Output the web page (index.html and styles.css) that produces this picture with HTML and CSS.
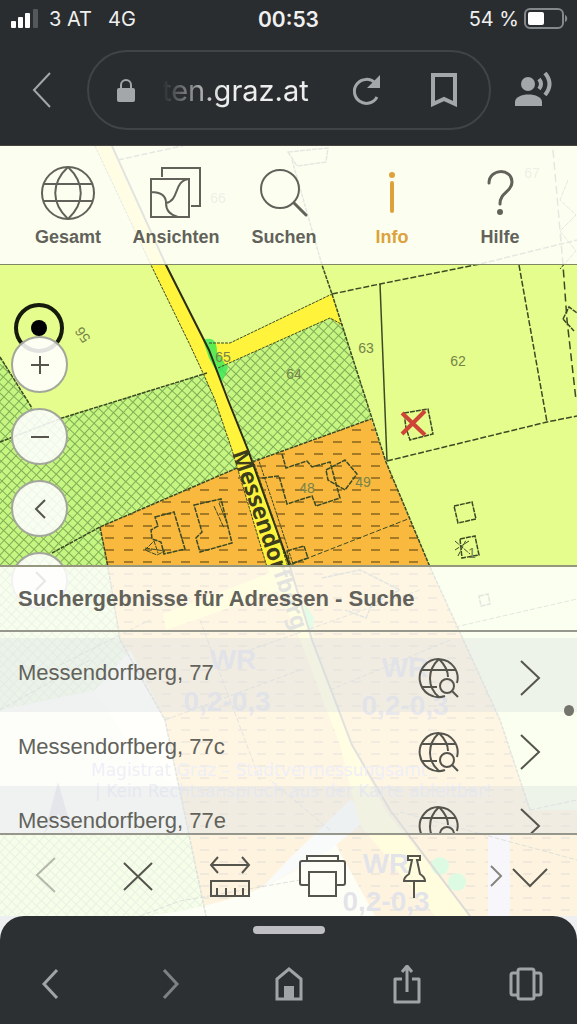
FILE: index.html
```html
<!DOCTYPE html>
<html lang="de">

<head>
    <meta charset="UTF-8">
    <meta name="viewport" content="width=device-width, initial-scale=1.0">
    <title>Stadtplan Graz</title>
    <link rel="stylesheet" href="styles.css">
</head>

<body>
    <header class="browser-top">
        <div class="status-bar">
            <div class="status-left">
                <svg width="32" height="20" viewBox="0 0 32 20" fill="#fff">
                    <rect x="2" y="12" width="5" height="7" rx="1" />
                    <rect x="9" y="8" width="5" height="11" rx="1" />
                    <rect x="16" y="4" width="5" height="15" rx="1" />
                    <rect x="24" y="0" width="5" height="19" rx="1" fill="#55585b" />
                </svg>
                <span>3 AT</span>
                <span class="network">4G</span>
            </div>
            <div class="clock">00:53</div>
            <div class="status-right">
                <span>54 %</span>
                <svg width="44" height="22" viewBox="0 0 44 22">
                    <rect x="1" y="1" width="38" height="19" rx="5" fill="none" stroke="#85888a" stroke-width="2" />
                    <rect x="4" y="4" width="16" height="13" rx="2" fill="#fff" />
                    <path d="M41 7c3 1 3 6 0 7z" fill="#85888a" />
                </svg>
            </div>
        </div>
        <div class="address-row">
            <button class="browser-btn" aria-label="Zurück">
                <svg width="20" height="38" viewBox="0 0 20 38" fill="none" stroke="#a4a7a9" stroke-width="2"><path d="M18 2L2 19l16 17" /></svg>
            </button>
            <form class="address-bar">
                <svg width="18" height="24" viewBox="0 0 18 24"><rect y="10" width="18" height="14" rx="2" fill="#a4a7a9" /><path d="M4 11V7a5 5 0 0 1 10 0v4" fill="none" stroke="#a4a7a9" stroke-width="2" /></svg>
                <input class="address-input" type="text" value="ten.graz.at" aria-label="Adresse">
                <button class="browser-btn" type="button" aria-label="Neu laden">
                    <svg width="30" height="32" viewBox="0 0 30 32"><path d="M26 23A12 12 0 1 1 24 9" fill="none" stroke="#a4a7a9" stroke-width="3" /><path d="M29 1v13H16z" fill="#a4a7a9" /></svg>
                </button>
                <button class="browser-btn bookmark" type="button" aria-label="Lesezeichen">
                    <svg width="26" height="34" viewBox="0 0 26 34"><path d="M2 2h22v29l-11-5-11 5z" fill="none" stroke="#a4a7a9" stroke-width="4" /></svg>
                </button>
            </form>
            <button class="browser-btn" aria-label="Vorlesen">
                <svg width="40" height="38" viewBox="0 0 40 38">
                    <circle cx="14" cy="13" r="7" fill="#a4a7a9" />
                    <path d="M1 35v-4c0-10 27-10 27 0v4z" fill="#a4a7a9" />
                    <path d="M25 8q4 5 0 10M31 2q9 11 0 22" fill="none" stroke="#a4a7a9" stroke-width="4" />
                </svg>
            </button>
        </div>
    </header>

    <main class="viewer">
        <svg class="map" viewBox="0 146 577 770" preserveAspectRatio="xMinYMin slice" aria-hidden="true">
            <defs>
                <pattern id="hatch" width="7" height="7" patternUnits="userSpaceOnUse" patternTransform="rotate(43)">
                    <rect width="7" height="7" fill="#c6f582" />
                    <path d="M0 0h7M0 0v7" stroke="#7fae55" stroke-width="2" />
                </pattern>
                <pattern id="dashes" x="5" y="4" width="19" height="12" patternUnits="userSpaceOnUse">
                    <rect width="19" height="12" fill="#f8b93e" />
                    <path d="M5 6h9" stroke="#a57a26" stroke-width="2" />
                </pattern>
            </defs>
            <rect y="146" width="577" height="770" fill="#e4fd8c" />

            <!-- zones -->
            <path d="M0 357L32 408 62 418 207 373 237 468 100 527 120 640 165 720 206 916H0z" fill="url(#hatch)" />
            <path d="M218 368L330 318 343 325 371 418 252 462z" fill="url(#hatch)" />
            <path d="M100 527L237 468 252 462 371 419 386 462 430 567 500 720 530 810H577V916H206L195 860 165 720 120 640z" fill="url(#dashes)" />
            <path d="M0 710L95 690 160 720 190 834H0z" fill="#f0f8dc" />
            <path d="M95 690L130 650 165 720 180 790 140 760z" fill="#fbfbe0" />
            <path d="M150 916C220 905 290 890 350 826L336 845 375 916z" fill="#f2ffd0" />
            <path d="M290 858L350 800 378 810 330 850 260 890z" fill="#d5e6e0" />
            <path d="M488 834h22v82h-22z" fill="#cfc8e0" />

            <!-- roads -->
            <path d="M95 146L151 265 190 345 203 373 215 400 232 450 267 567 300 640 340 745 360 825 435 916H470L385 810 352 745 312 640 290 567 248 450 228 400 209 350 166 265 112 146z" fill="#fff33c" />
            <path d="M209 343H230L332 294 342 326 330 318 218 368z" fill="#fff33c" />
            <path d="M163 614L272 572 280 590 166 630z" fill="#fff33c" />
            <path d="M203 340Q217 335 217 352L228 368 222 382 209 358z" fill="#35e858" fill-opacity=".8" />
            <path d="M304 602L314 618 312 634 306 622z" fill="#35e858" />
            <circle cx="440" cy="866" r="9" fill="#35e858" />
            <circle cx="457" cy="882" r="9" fill="#35e858" />

            <!-- parcel lines -->
            <g fill="none" stroke="#3b4a24" stroke-width="1">
                <path d="M112 146L166 265 209 350 228 400 248 450 290 567 312 640 352 745 390 810 470 916" stroke="#2b2c12" stroke-width="2" />
                <path d="M95 146L151 265 190 345 203 373 215 400 232 450 267 567M209 343H230L332 294M218 368L330 318 343 325M253 460L272 515 288 567M258 458L277 515 294 567" stroke-dasharray="3 1" />
                <path d="M0 357L32 408M0 442L62 418 207 373M52 553L100 527 237 468M252 462L371 419M100 527L108 567 120 640 165 720 206 916M292 160L322 265 332 294 386 462 430 567 500 720 530 810" stroke-width="1.500" stroke-dasharray="4 1" />
                <path d="M332 294L380 284 480 264 577 240M387 461L547 422 577 416M519 265L547 422M118 160L218 138" stroke-width="1.500" stroke-dasharray="6 2" />
                <path d="M380 284L387 461" stroke-width="1.500" />
                <path d="M553 150L563 265 567 320 576 400" stroke-width="1.500" stroke-dasharray="8 4" />
                <path d="M285 567L408 519M455 627L577 599M60 665L150 620M250 650L420 590M330 690L450 640M0 710L90 660M165 720L300 670M200 620L260 780M530 810L577 800M330 830L270 780M140 916L180 901 300 880M400 812L577 860" stroke-dasharray="5 2" />
                <!-- buildings -->
                <g stroke-dasharray="5 1" stroke-width="1.500">
                    <path d="M155 517L174 512 185 549 164 554 161 542 152 539 151 530 158 526zM194 505L221 499 232 543 200 552 196 538 202 532z" />
                    <path d="M282 454L286 468 307 461 312 467 330 462 340 498 316 506 312 496 287 504 279 476 262 478" />
                    <path d="M326 470L345 460 357 474 345 490 328 480zM287 551L304 546 308 558 290 564zM404 413L428 409 433 434 410 440 406 428zM454 506L472 502 476 519 458 523zM460 539L475 536 479 555 462 558zM563 319L569 307 577 313M563 319L574 331M479 596L488 594 490 604 481 606zM288 152L328 148 326 162 297 166zM322 578L360 570 400 590 372 604 366 618 345 610" />
                    <path d="M145 548l20 3-8 4-12-5 9-9 4 12M214 506l10 22M219 503l8 20M455 541l15 13M455 550l14-9M458 556l8-16M568 180l-8 20 16 15-16 16 16 20-16 18" stroke-width="1" />
                </g>
            </g>
            <path d="M402 413l23 22M425 411l-23 23" stroke="#ce4538" stroke-width="4" />
            <circle cx="39" cy="328" r="23" fill="none" stroke="#161a0c" stroke-width="4" />
            <circle cx="39" cy="328" r="8" fill="#000" />

            <g class="parcel-no">
                <text x="366" y="343">63</text>
                <text x="458" y="356">62</text>
                <text x="294" y="369">64</text>
                <text x="223" y="352">65</text>
                <text x="307" y="483">48</text>
                <text x="363" y="477">49</text>
                <text x="472" y="548">1</text>
                <text x="218" y="193">66</text>
                <text x="532" y="168">67</text>
                <text transform="translate(78 338) rotate(235)">56</text>
            </g>
            <text class="street" transform="translate(232 453) rotate(71)">Messendorfberg</text>
            <g class="zone-label">
                <text x="233" y="669">WR</text>
                <text x="227" y="711">0,2-0,3</text>
                <text x="405" y="677">WR</text>
                <text x="405" y="715">0,2-0,3</text>
                <text x="386" y="873">WR</text>
                <text x="386" y="911">0,2-0,3</text>
            </g>
            <path d="M58 782l-14 52 14-20 15 20z" fill="#777a9a" />
            <g class="map-note">
                <text x="91" y="776">Magistrat Graz – Stadtvermessungsamt</text>
                <text x="95" y="797">| Kein Rechtsanspruch aus der Karte ableitbar!</text>
            </g>
        </svg>

        <nav class="main-menu">
            <a class="menu-item" href="#gesamt">
                <svg viewBox="0 0 56 56"><circle cx="28" cy="28" r="26" /><path d="M28 2c-17 16-17 36 0 52M28 2c17 16 17 36 0 52M4 19h48M4 36h48" /></svg>
                Gesamt
            </a>
            <a class="menu-item" href="#ansichten">
                <svg viewBox="0 0 56 56"><path d="M14 12V3h38v38h-9M3 14h38v38H3zM3 27c9 0 15 3 15 11 0 7 4 12 12 14M18 38c14-3 7-22 23-24" /></svg>
                Ansichten
            </a>
            <a class="menu-item" href="#suchen">
                <svg viewBox="0 0 56 56"><circle cx="24" cy="24" r="19" /><path d="M38 38l12 12" stroke-width="3" stroke-linecap="round" /></svg>
                Suchen
            </a>
            <a class="menu-item active" href="#info">
                <svg viewBox="0 0 56 56"><path d="M28 18v28" stroke-width="4" stroke-linecap="round" /><circle cx="28" cy="10" r="3" fill="currentColor" stroke="none" /></svg>
                Info
            </a>
            <a class="menu-item" href="#hilfe">
                <svg viewBox="0 0 56 56"><path d="M17 18c0-15 23-15 23-1 0 10-12 10-12 22" stroke-width="3" stroke-linecap="round" /><circle cx="28" cy="47" r="3" fill="currentColor" stroke="none" /></svg>
                Hilfe
            </a>
        </nav>

        <div class="map-window">
            <div class="map-controls">
                <button class="round-btn" aria-label="Vergrößern"><svg viewBox="0 0 24 24"><path d="M3 12h18M12 3v18" /></svg></button>
                <button class="round-btn" aria-label="Verkleinern"><svg viewBox="0 0 24 24"><path d="M3 12h18" /></svg></button>
                <button class="round-btn" aria-label="Vorige Ansicht"><svg viewBox="0 0 24 24"><path d="M17 3l-9 9 9 9" /></svg></button>
                <button class="round-btn" aria-label="Nächste Ansicht"><svg viewBox="0 0 24 24"><path d="M8 3l9 9-9 9" /></svg></button>
            </div>
        </div>

        <section class="results">
            <h1 class="results-title">Suchergebnisse für Adressen - Suche</h1>
            <ul class="results-list">
                <li class="result">
                    <a class="result-name" href="#77">Messendorfberg, 77</a>
                    <button class="icon-btn" aria-label="Auf Karte zeigen"><svg width="42" height="42" viewBox="0 0 42 42"><path d="M39 26A19 19 0 1 0 27 39M21 2c-12 11-12 28 0 38M21 2c6 6 9 11 9 18M4 13h34M4 30h15" /><circle cx="29" cy="29" r="7" /><path d="M34 34l6 6" /></svg></button>
                    <button class="icon-btn" aria-label="Details"><svg width="24" height="38" viewBox="0 0 24 38"><path d="M3 2l18 17L3 36" /></svg></button>
                </li>
                <li class="result">
                    <a class="result-name" href="#77c">Messendorfberg, 77c</a>
                    <button class="icon-btn" aria-label="Auf Karte zeigen"><svg width="42" height="42" viewBox="0 0 42 42"><path d="M39 26A19 19 0 1 0 27 39M21 2c-12 11-12 28 0 38M21 2c6 6 9 11 9 18M4 13h34M4 30h15" /><circle cx="29" cy="29" r="7" /><path d="M34 34l6 6" /></svg></button>
                    <button class="icon-btn" aria-label="Details"><svg width="24" height="38" viewBox="0 0 24 38"><path d="M3 2l18 17L3 36" /></svg></button>
                </li>
                <li class="result">
                    <a class="result-name" href="#77e">Messendorfberg, 77e</a>
                    <button class="icon-btn" aria-label="Auf Karte zeigen"><svg width="42" height="42" viewBox="0 0 42 42"><path d="M39 26A19 19 0 1 0 27 39M21 2c-12 11-12 28 0 38M21 2c6 6 9 11 9 18M4 13h34M4 30h15" /><circle cx="29" cy="29" r="7" /><path d="M34 34l6 6" /></svg></button>
                    <button class="icon-btn" aria-label="Details"><svg width="24" height="38" viewBox="0 0 24 38"><path d="M3 2l18 17L3 36" /></svg></button>
                </li>
            </ul>
            <span class="scroll-dot"></span>
        </section>

        <div class="tools">
            <button class="tool disabled" aria-label="Zurück"><svg width="50" height="50" viewBox="0 0 50 50"><path d="M34 7L16 24l18 17" /></svg></button>
            <button class="tool" aria-label="Schließen"><svg width="50" height="50" viewBox="0 0 50 50"><path d="M11 12l28 27M39 12L11 39" /></svg></button>
            <button class="tool" aria-label="Messen"><svg width="50" height="50" viewBox="0 0 50 50"><path d="M6 14h38M13 6l-7 8 7 8M37 6l7 8-7 8M6 30h38v15H6zM12 45v-8M21 45v-8M30 45v-8M38 45v-8" /></svg></button>
            <button class="tool" aria-label="Drucken"><svg width="50" height="50" viewBox="0 0 50 50"><path d="M10 10V5h31v5M11 34H5q-2 0-2-2V12q0-2 2-2h41q2 0 2 2v20q0 2-2 2h-6M12 21h27v24H12z" /></svg></button>
            <button class="tool" aria-label="Markieren"><svg width="50" height="50" viewBox="0 0 50 50"><path d="M19 5h12v4h-3l3 14q5 3 5 7H15q0-4 5-7l3-14h-4zM25 30v17" /></svg></button>
            <div class="tool-more">
                <button class="icon-btn" aria-label="Weitere Werkzeuge"><svg width="16" height="24" viewBox="0 0 16 24" opacity=".7"><path d="M3 2l10 10L3 22" /></svg></button>
                <button class="icon-btn" aria-label="Einklappen"><svg width="38" height="24" viewBox="0 0 38 24"><path d="M2 5l17 17L36 5" /></svg></button>
            </div>
        </div>
    </main>

    <footer class="browser-bottom">
        <div class="sheet">
            <span class="grabber"></span>
            <nav class="browser-nav">
                <button class="nav-btn" aria-label="Zurück"><svg viewBox="0 0 40 40"><path d="M26 5L13 19l13 14" /></svg></button>
                <button class="nav-btn dim" aria-label="Vorwärts"><svg viewBox="0 0 40 40"><path d="M14 5l13 14-13 14" /></svg></button>
                <button class="nav-btn" aria-label="Startseite"><svg viewBox="0 0 40 40"><path d="M8 34V14L20 4l12 10v20z" /><path d="M15 21h10v13H15z" fill="#a1a4a6" stroke="none" /></svg></button>
                <button class="nav-btn" aria-label="Teilen"><svg viewBox="0 0 40 40"><path d="M15 14H8v23h24V14h-7M20 27V2M15 7l5-6 5 6" stroke-linejoin="round" /></svg></button>
                <button class="nav-btn" aria-label="Tabs"><svg viewBox="0 0 40 40"><rect x="12" y="4" width="16" height="30" rx="2" /><path d="M12 8H7q-2 0-2 2v18q0 2 2 2h5M28 8h5q2 0 2 2v18q0 2-2 2h-5" /></svg></button>
            </nav>
        </div>
    </footer>
</body>

</html>
```
FILE: styles.css
```css
* {
    box-sizing: border-box;
}

body {
    margin: 0;
    min-height: 100vh;
    display: flex;
    flex-direction: column;
    font-family: "Liberation Sans", Arial, sans-serif;
    color: #62625b;
}

button {
    padding: 0;
    border: none;
    background: none;
    color: inherit;
    cursor: pointer;
}

a {
    color: inherit;
    text-decoration: none;
}

svg {
    display: block;
}

/* browser header */
.browser-top {
    background-color: #2a2d2f;
    border-bottom: 1px solid #48443f;
    padding-bottom: 15px;
    color: #f0f0f0;
    font-family: Inter, Roboto, sans-serif;
}

.status-bar {
    display: grid;
    grid-template-columns: 1fr auto 1fr;
    align-items: center;
    height: 38px;
    padding: 0 9px;
    font-size: 20px;
}

.status-left,
.status-right {
    display: flex;
    align-items: center;
    gap: 8px;
}

.status-right {
    justify-content: flex-end;
    gap: 5px;
}

.network {
    margin-left: 8px;
}

.clock {
    font-size: 21px;
    font-weight: 600;
}

.address-row {
    display: flex;
    align-items: center;
    gap: 23px;
    padding: 12px 23px 0 32px;
}

.address-row > .browser-btn:first-child {
    margin-right: 12px;
}

.address-bar {
    flex: 1;
    min-width: 0;
    display: flex;
    align-items: center;
    height: 80px;
    padding: 0 32px 0 28px;
    border: 2px solid #414446;
    border-radius: 40px;
}

.address-input {
    flex: 1;
    min-width: 0;
    margin: 0 30px 0 27px;
    padding: 0;
    border: none;
    outline: none;
    background: none;
    color: #eceded;
    font-family: inherit;
    font-size: 29px;
    -webkit-mask-image: linear-gradient(to right, transparent, #000 60px);
    mask-image: linear-gradient(to right, transparent, #000 60px);
}

.bookmark {
    margin-left: 50px;
}

/* map viewer */
.viewer {
    position: relative;
    flex: 1;
    display: flex;
    flex-direction: column;
    overflow: hidden;
}

.map {
    position: absolute;
    top: 0;
    left: 0;
    width: 100%;
    height: 100%;
}

.parcel-no {
    font-size: 14px;
    fill: #77834a;
    text-anchor: middle;
    dominant-baseline: hanging;
}

.street {
    font-family: "Noto Sans", sans-serif;
    font-size: 23px;
    font-weight: bold;
    fill: #3c3e1e;
}

.zone-label {
    font-size: 28px;
    font-weight: bold;
    fill: #5c5c80;
    text-anchor: middle;
}

.map-note {
    font-family: "DejaVu Sans", sans-serif;
    font-size: 17px;
    fill: #8a8ac8;
}

.main-menu {
    position: relative;
    display: flex;
    padding: 19px 23px 18px 14px;
    background-color: rgba(255, 255, 255, 0.87);
    border-bottom: 1px solid #7f8765;
}

.menu-item {
    flex: 1;
    display: flex;
    flex-direction: column;
    align-items: center;
    gap: 7px;
    font-size: 18px;
    line-height: 18px;
    font-weight: bold;
}

.menu-item svg {
    width: 56px;
    height: 56px;
    fill: none;
    stroke: currentColor;
    stroke-width: 2;
}

.menu-item.active {
    color: #dda23c;
}

.map-window {
    position: relative;
    flex: 1;
}

.map-controls {
    position: absolute;
    top: 71px;
    left: 11px;
    display: flex;
    flex-direction: column;
    gap: 15px;
}

.round-btn {
    display: flex;
    align-items: center;
    justify-content: center;
    width: 57px;
    height: 57px;
    border: 2px solid #a3a79a;
    border-radius: 50%;
    background-color: rgba(255, 255, 255, 0.88);
}

.round-btn svg {
    width: 24px;
    height: 24px;
    fill: none;
    stroke: #55554e;
    stroke-width: 2;
}

/* search results */
.results {
    position: relative;
    border-top: 2px solid #96977f;
    background-color: rgba(255, 255, 255, 0.86);
}

.results-title {
    margin: 0;
    padding: 18px;
    border-bottom: 2px solid #96978c;
    font-size: 22px;
    line-height: 27px;
}

.results-list {
    height: 201px;
    margin: 0;
    padding: 6px 0 0;
    overflow: hidden;
    list-style: none;
}

.result {
    display: flex;
    align-items: center;
    height: 74px;
    padding: 6px 35px 0 18px;
}

.result:nth-child(odd) {
    background-color: rgba(210, 216, 222, 0.3);
}

.result-name {
    flex: 1;
    padding-bottom: 10px;
    font-size: 22px;
}

.icon-btn svg,
.tool svg {
    fill: none;
    stroke: #55554e;
    stroke-width: 2;
}

.result .icon-btn + .icon-btn {
    margin-left: 58px;
}

.scroll-dot {
    position: absolute;
    top: 138px;
    right: 3px;
    width: 10px;
    height: 11px;
    border-radius: 50%;
    background-color: #74746c;
}

.tools {
    position: relative;
    display: flex;
    align-items: center;
    height: 83px;
    border-top: 2px solid #96978c;
    background-color: rgba(255, 255, 255, 0.83);
}

.tool {
    flex: 92;
    display: flex;
    justify-content: center;
}

.disabled {
    opacity: 0.4;
}

.tool-more {
    flex: 117;
    display: flex;
    align-items: center;
    justify-content: center;
    gap: 7px;
}

/* browser footer */
.browser-bottom {
    background-color: #eeeff1;
}

.sheet {
    height: 108px;
    padding-top: 10px;
    border-radius: 24px 24px 0 0;
    background-color: #2d3033;
}

.grabber {
    display: block;
    width: 72px;
    height: 8px;
    margin: 0 auto;
    border-radius: 4px;
    background-color: #bebec3;
}

.browser-nav {
    display: flex;
    justify-content: space-between;
    padding: 31px 31px 0;
}

.nav-btn svg {
    width: 40px;
    height: 40px;
    fill: none;
    stroke: #a1a4a6;
    stroke-width: 3;
}

.dim {
    opacity: 0.7;
}
```
